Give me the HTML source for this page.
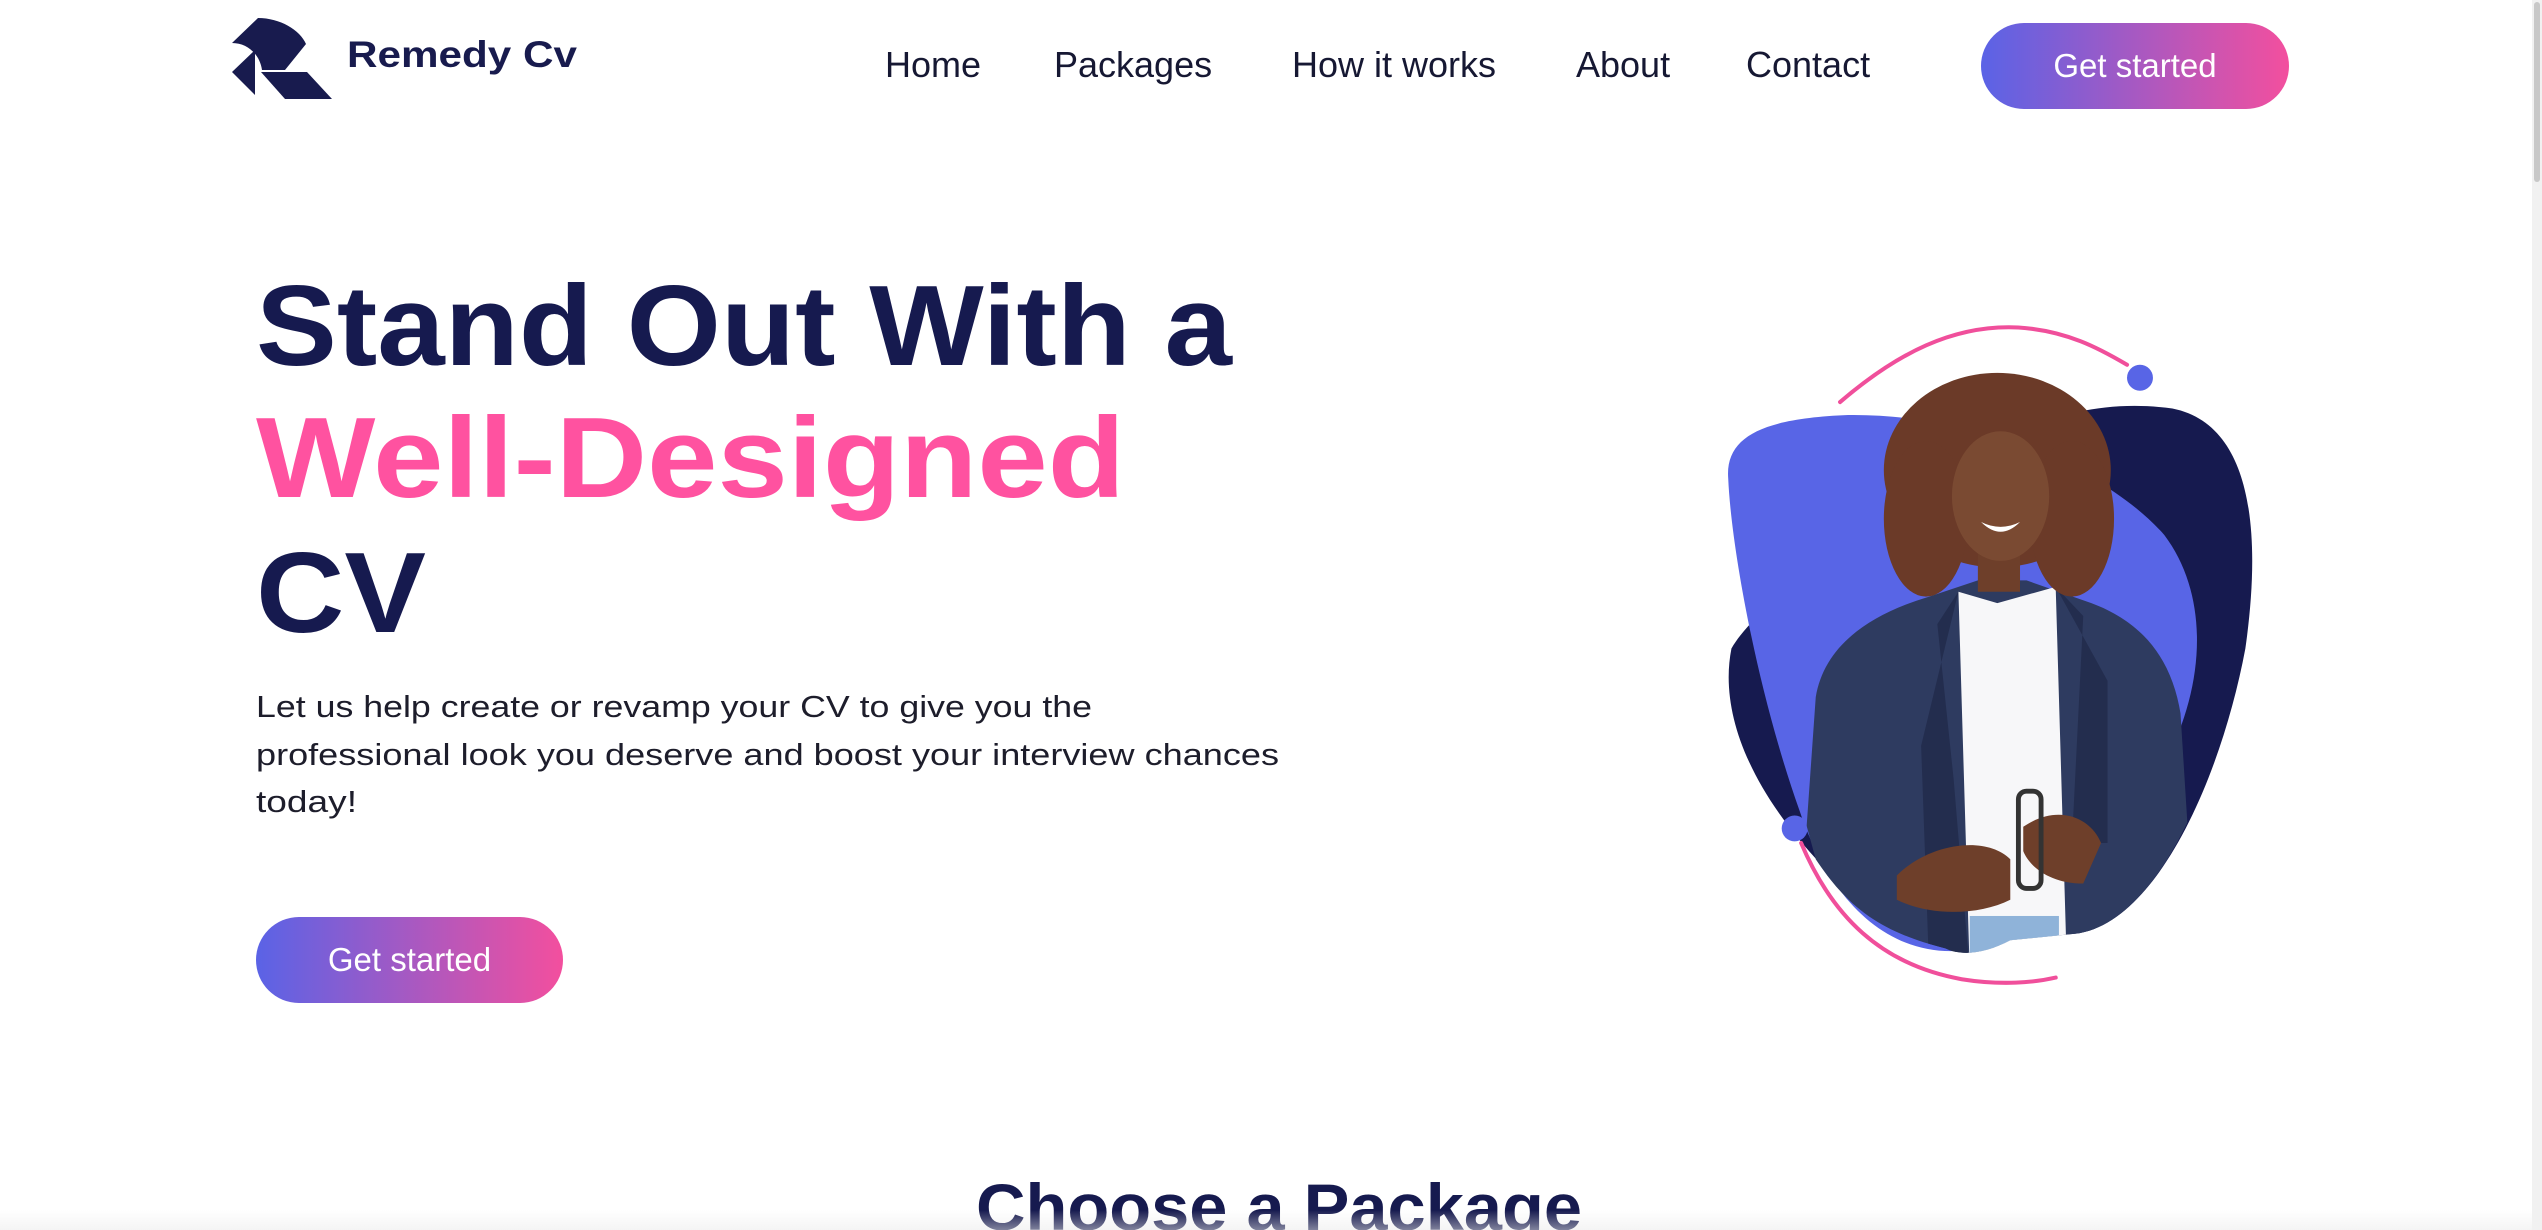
<!DOCTYPE html>
<html><head><meta charset="utf-8"><style>
html,body{margin:0;padding:0;width:2542px;height:1230px;overflow:hidden;background:#fff;font-family:"Liberation Sans",sans-serif}
.nav{position:absolute;top:44px;font-size:36px;color:#161833;}
.btn{position:absolute;border-radius:44px;background:linear-gradient(90deg,#5a63e6,#f34f9e);color:#fff;display:flex;align-items:center;justify-content:center;font-size:33px}
</style></head><body>
<svg style="position:absolute;left:0;top:0" width="2542" height="1230">
<!-- logo -->
<g fill="#181b4e">
<path d="M232,43 L258,18 C280,18 300,30 306,44 L285,70 L262,70 C260,55 248,43 232,43Z"/>
<path d="M232,72 L255,50 L255,95Z"/>
<path d="M261,72 L307,72 L332,99 L285,99Z"/>
</g>
<text x="347" y="67" font-size="37" font-weight="bold" fill="#181b4e" textLength="230" lengthAdjust="spacingAndGlyphs">Remedy Cv</text>
<!-- headline -->
<text x="256" y="365" font-size="114" font-weight="bold" fill="#161a4f" textLength="976" lengthAdjust="spacingAndGlyphs">Stand Out With a</text>
<text x="256" y="497" font-size="114" font-weight="bold" fill="#ff52a0" textLength="869" lengthAdjust="spacingAndGlyphs">Well-Designed</text>
<text x="256" y="632" font-size="114" font-weight="bold" fill="#161a4f" textLength="170" lengthAdjust="spacingAndGlyphs">CV</text>
<g font-size="31" fill="#1d1d2b">
<text x="256" y="717" textLength="836" lengthAdjust="spacingAndGlyphs">Let us help create or revamp your CV to give you the</text>
<text x="256" y="765" textLength="1023" lengthAdjust="spacingAndGlyphs">professional look you deserve and boost your interview chances</text>
<text x="256" y="812" textLength="101" lengthAdjust="spacingAndGlyphs">today!</text>
</g>
<text x="1279" y="1230" font-size="66" font-weight="bold" fill="#161a4f" text-anchor="middle" textLength="606" lengthAdjust="spacingAndGlyphs">Choose a Package</text>
<g transform="scale(1.6212)">
<defs><clipPath id="cp">
<path d="M1100,200 L1400,200 L1400,300 L1330,300 L1380,400 C1370,480 1330,570 1280,576 L1240,580 C1225,588 1210,590 1200,585 C1160,575 1140,560 1120,530 L1090,420 L1080,300 L1100,300Z"/>
</clipPath></defs>
<path fill="#161a4f" d="M1068,400 C1060,440 1080,490 1130,540 C1170,575 1240,580 1280,576 C1330,570 1370,480 1385,400 C1395,330 1390,262 1340,252 C1290,245 1250,262 1230,275 L1200,300 C1150,330 1085,370 1068,400Z"/>
<path fill="#5865e6" d="M1066,295 C1064,268 1090,258 1140,256 C1220,255 1300,290 1335,330 C1365,370 1360,430 1330,480 C1300,530 1260,572 1220,585 C1170,595 1130,560 1110,500 C1085,430 1068,340 1066,295Z"/>
<path fill="none" stroke="#f04f9b" stroke-width="2.5" stroke-linecap="round" d="M1135,248 C1170,218 1205,200 1245,202 C1275,204 1295,215 1312,225"/>
<circle cx="1320" cy="233" r="8" fill="#5865e6"/>
<circle cx="1107" cy="511" r="8" fill="#5865e6"/>
<path fill="none" stroke="#f04f9b" stroke-width="2.5" stroke-linecap="round" d="M1111,520 C1130,565 1160,595 1210,604 C1235,608 1255,606 1268,603"/>
<g clip-path="url(#cp)">
<path fill="#2e3b60" d="M1108,600 L1120,430 C1125,400 1150,380 1190,368 L1220,358 L1250,358 L1290,372 C1325,385 1340,410 1345,440 L1350,520 L1290,600Z"/>
<path fill="#f7f7f9" d="M1208,365 L1232,372 L1268,362 L1275,600 L1215,600Z"/>
<path fill="#232d4e" d="M1208,365 L1195,385 L1205,480 L1215,600 L1190,600 L1185,460Z M1268,362 L1285,380 L1278,520 L1300,520 L1300,420Z"/>
<g fill="#6b3a28">
<ellipse cx="1232" cy="290" rx="70" ry="60"/>
<ellipse cx="1188" cy="320" rx="26" ry="48"/>
<ellipse cx="1278" cy="320" rx="26" ry="48"/>
</g>
<rect x="1220" y="330" width="26" height="35" fill="#6e3f2a"/>
<ellipse cx="1234" cy="306" rx="30" ry="40" fill="#7a4a32"/>
<path d="M1222,322 Q1234,334 1246,322 Q1234,328 1222,322Z" fill="#fff"/>
<path fill="#6e3f2a" d="M1170,540 C1190,520 1225,515 1240,530 L1240,555 C1220,565 1190,565 1170,555Z M1248,510 C1270,495 1290,505 1296,520 L1285,545 C1265,545 1252,535 1248,525Z"/>
<rect x="1245" y="488" width="14" height="60" rx="5" fill="none" stroke="#333" stroke-width="3"/>
<rect x="1215" y="565" width="55" height="30" fill="#8fb3d9"/>
</g>
</g>
</svg>
<div class="nav" style="left:885px">Home</div>
<div class="nav" style="left:1054px">Packages</div>
<div class="nav" style="left:1292px">How it works</div>
<div class="nav" style="left:1576px">About</div>
<div class="nav" style="left:1746px">Contact</div>
<div class="btn" style="left:1981px;top:23px;width:308px;height:86px">Get started</div>
<div class="btn" style="left:256px;top:917px;width:307px;height:86px">Get started</div>
<div style="position:absolute;right:0;top:0;width:10px;height:1230px;background:#f1f1f1"></div>
<div style="position:absolute;right:2px;top:2px;width:6px;height:180px;background:#c8c8c8;border-radius:3px"></div>
<div style="position:absolute;left:0;bottom:0;width:2532px;height:20px;background:linear-gradient(#fff0,#eaeaea80)"></div>
</body></html>
